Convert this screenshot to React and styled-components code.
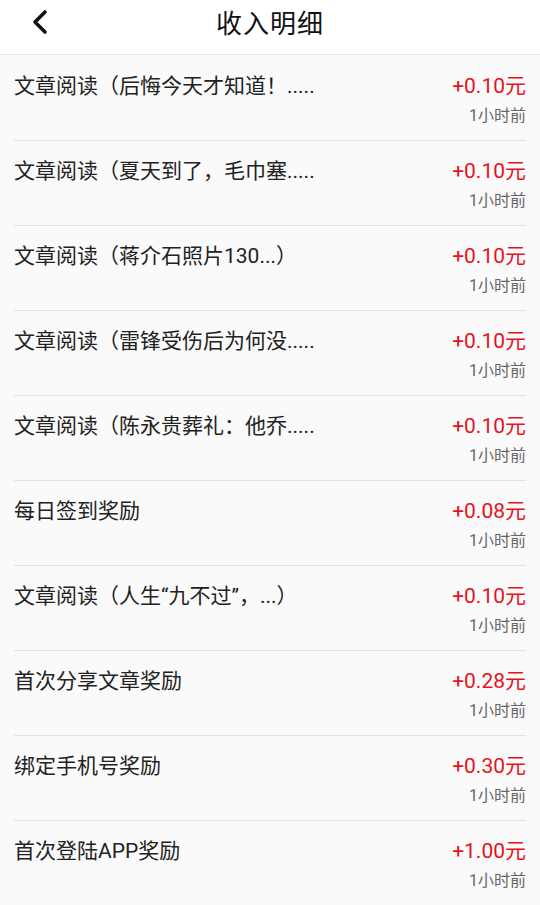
import React from "react";
import styled, { createGlobalStyle } from "styled-components";

const GlobalStyle = createGlobalStyle`
  html, body {
    margin: 0;
    padding: 0;
    background: #fafafa;
    font-family: Roboto, "Noto Sans CJK SC", sans-serif;
  }
`;

const records = [
  { title: "文章阅读（后悔今天才知道！.....", amount: "+0.10元" },
  { title: "文章阅读（夏天到了，毛巾塞.....", amount: "+0.10元" },
  { title: "文章阅读（蒋介石照片130...）", amount: "+0.10元" },
  { title: "文章阅读（雷锋受伤后为何没.....", amount: "+0.10元" },
  { title: "文章阅读（陈永贵葬礼：他乔.....", amount: "+0.10元" },
  { title: "每日签到奖励", amount: "+0.08元" },
  { title: "文章阅读（人生“九不过”，...）", amount: "+0.10元" },
  { title: "首次分享文章奖励", amount: "+0.28元" },
  { title: "绑定手机号奖励", amount: "+0.30元" },
  { title: "首次登陆APP奖励", amount: "+1.00元" },
];

const App = () => {
  return (
    <Page>
      <GlobalStyle />
      <Header>
        <BackButton>
          <svg width="18" height="26" viewBox="0 0 18 26">
            <polyline
              points="14,3 4,13 14,23"
              fill="none"
              stroke="#111"
              strokeWidth="3.6"
              strokeLinecap="round"
              strokeLinejoin="round"
            />
          </svg>
        </BackButton>
        <Title>收入明细</Title>
      </Header>
      <List>
        {records.map((r, i) => (
          <Row key={i}>
            <ItemTitle>{r.title}</ItemTitle>
            <Side>
              <Amount>{r.amount}</Amount>
              <Time>1小时前</Time>
            </Side>
          </Row>
        ))}
      </List>
    </Page>
  );
};

export default App;

const Page = styled.div`
  width: 540px;
  min-height: 905px;
  background: #fafafa;
`;

const Header = styled.div`
  position: relative;
  height: 54px;
  background: #fff;
  border-bottom: 1px solid #e2e2e2;
  display: flex;
  align-items: center;
  justify-content: center;
`;

const BackButton = styled.div`
  position: absolute;
  left: 31px;
  top: 9px;
  display: flex;
`;

const Title = styled.h1`
  margin: 0 0 10px;
  font-size: 26px;
  line-height: 34px;
  font-weight: 400;
  color: #111;
  letter-spacing: 1px;
  font-family: "Noto Sans CJK SC", sans-serif;
`;

const List = styled.div`
  padding: 1px 14px 0;
`;

const Row = styled.div`
  display: flex;
  justify-content: space-between;
  align-items: flex-start;
  padding: 16px 0 13px;
  border-bottom: 1px solid #e3e3e3;
`;

const ItemTitle = styled.div`
  font-size: 21px;
  line-height: 28px;
  color: #222;
  font-family: Roboto, "Noto Sans CJK SC", sans-serif;
`;

const Side = styled.div`
  display: flex;
  flex-direction: column;
  align-items: flex-end;
`;

const Amount = styled.div`
  font-size: 21px;
  line-height: 28px;
  color: #e4131c;
  font-family: Roboto, "Noto Sans CJK SC", sans-serif;
`;

const Time = styled.div`
  margin-top: 5px;
  font-size: 16px;
  line-height: 22px;
  color: #666;
  font-family: Roboto, "Noto Sans CJK SC", sans-serif;
`;
